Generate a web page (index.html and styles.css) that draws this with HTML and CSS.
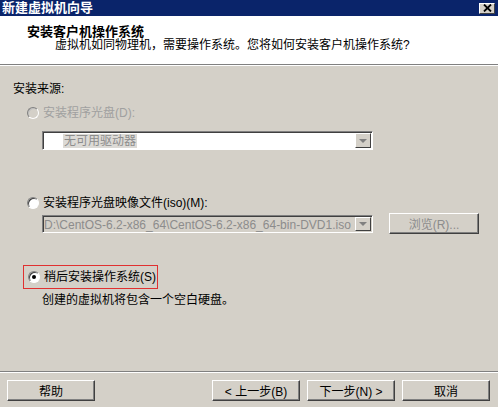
FILE: index.html
```html
<!DOCTYPE html>
<html lang="zh-CN">
<head>
  <meta charset="UTF-8" />
  <title>新建虚拟机向导</title>
  <link rel="stylesheet" href="styles.css">
</head>
<body>

  <div class="window">
    <div class="titlebar">
      <span class="title">新建虚拟机向导</span>
      <span class="close">
        <svg width="9" height="8" viewBox="0 0 9 8"><path d="M1 0.5 L8 7.5 M8 0.5 L1 7.5" stroke="#000" stroke-width="1.8"/></svg>
      </span>
    </div>

    <div class="header">
      <h1>安装客户机操作系统</h1>
      <p>虚拟机如同物理机，需要操作系统。您将如何安装客户机操作系统?</p>
    </div>

    <div class="content">
      <div class="group-label">安装来源:</div>

      <div class="option disabled">
        <span class="radio"></span>
        <span>安装程序光盘(D):</span>
      </div>
      <div class="combo combo-empty">
        <span class="combo-text"><span class="sel">无可用驱动器</span></span>
        <span class="drop"><i></i></span>
      </div>

      <div class="option iso">
        <span class="radio"></span>
        <span>安装程序光盘映像文件(iso)(M):</span>
      </div>
      <div class="iso-row">
        <div class="combo combo-iso">
          <span class="combo-text">D:\CentOS-6.2-x86_64\CentOS-6.2-x86_64-bin-DVD1.iso</span>
          <span class="drop"><i></i></span>
        </div>
        <button class="btn browse" disabled>浏览(R)...</button>
      </div>

      <div class="option later">
        <span class="radio checked"></span>
        <span>稍后安装操作系统(S)</span>
      </div>
      <p class="note">创建的虚拟机将包含一个空白硬盘。</p>
    </div>

    <div class="footer">
      <button class="btn">帮助</button>
      <div class="nav">
        <button class="btn">&lt; 上一步(B)</button>
        <button class="btn">下一步(N) &gt;</button>
        <button class="btn">取消</button>
      </div>
    </div>
  </div>

</body>
</html>
```

FILE: styles.css
```css
* {
  box-sizing: border-box;
  margin: 0;
  padding: 0;
}
body {
  font-family: "Liberation Sans", "Noto Sans CJK SC", sans-serif;
  font-size: 12px;
  background: #d4d0c8;
  color: #000;
}
.window {
  width: 498px;
  height: 407px;
  background: #d4d0c8;
  display: flex;
  flex-direction: column;
}
.titlebar {
  height: 16px;
  background: #0a246a;
  display: flex;
  justify-content: space-between;
  align-items: center;
  padding: 0 3px 0 2px;
}
.title {
  color: #fff;
  font-weight: bold;
  font-size: 13px;
  line-height: 16px;
}
.close {
  width: 16px;
  height: 11px;
  background: #d4d0c8;
  border-top: 1px solid #fff;
  border-left: 1px solid #fff;
  border-right: 1px solid #404040;
  border-bottom: 1px solid #404040;
  display: flex;
  align-items: center;
  justify-content: center;
}
.header {
  height: 49px;
  background: #fff;
  border-bottom: 1px solid #808080;
  box-shadow: 0 1px 0 #fff;
  padding: 8px 0 0 27px;
}
.header h1 {
  font-size: 13px;
  font-weight: bold;
  line-height: 16px;
}
.header p {
  line-height: 16px;
  margin: -3px 0 0 28px;
}
.content {
  height: 305px;
  margin-top: 1px;
  padding: 15px 0 0 13px;
}
.group-label {
  line-height: 16px;
}
.option {
  display: flex;
  align-items: center;
  gap: 4px;
  line-height: 16px;
  margin: 8px 0 0 14px;
}
.option.disabled {
  color: #a0a0a0;
}
.option.iso {
  margin-top: 45px;
}
.radio {
  width: 12px;
  height: 12px;
  border-radius: 50%;
  background: #fff;
  border: 1px solid;
  border-color: #808080 #fff #fff #808080;
  box-shadow: inset 1px 1px 0 #404040;
  position: relative;
}
.option.disabled .radio {
  background: #d4d0c8;
  box-shadow: inset 1px 1px 0 #c0c0c0;
}
.radio.checked::after {
  content: "";
  position: absolute;
  left: 3px;
  top: 3px;
  width: 4px;
  height: 4px;
  border-radius: 50%;
  background: #000;
}
.combo {
  height: 19px;
  width: 331px;
  margin: 10px 0 0 29px;
  display: flex;
  border: 1px solid;
  border-color: #808080 #fff #fff #808080;
  box-shadow: inset 1px 1px 0 #404040;
  background: #fff;
}
.combo-text {
  flex: 1;
  overflow: hidden;
  white-space: nowrap;
  line-height: 16px;
  padding: 1px 0 0 2px;
}
.combo-empty .combo-text {
  padding-left: 20px;
  color: #8c8c8c;
}
.sel {
  background: #dcdad6;
  padding: 0 1px;
}
.drop {
  width: 16px;
  margin: 1px 1px 1px 0;
  background: #d4d0c8;
  border: 1px solid;
  border-color: #fff #404040 #404040 #fff;
  display: flex;
  align-items: center;
  justify-content: center;
}
.drop i {
  width: 0;
  height: 0;
  border-left: 4px solid transparent;
  border-right: 4px solid transparent;
  border-top: 4px solid #808080;
}
.iso-row {
  display: flex;
  align-items: center;
  height: 21px;
  margin: 2px 0 0 29px;
}
.iso-row .combo {
  margin: 0;
  height: 18px;
  background: #d4d0c8;
}
.combo-iso .combo-text {
  color: #8c8c8c;
  padding-left: 1px;
}
.btn {
  font-family: inherit;
  font-size: 12px;
  width: 88px;
  height: 21px;
  background: #d4d0c8;
  color: #000;
  border: 1px solid;
  border-color: #fff #404040 #404040 #fff;
  box-shadow: inset -1px -1px 0 #808080;
}
.btn.browse {
  width: 90px;
  margin-left: 16px;
  color: #8c8c8c;
}
.option.later {
  width: 135px;
  height: 24px;
  margin: 31px 0 0 10px;
  padding-left: 4px;
  border: 1px solid #e03030;
}
.note {
  line-height: 16px;
  margin: 3px 0 0 29px;
}
.footer {
  border-top: 1px solid #808080;
  box-shadow: inset 0 1px 0 #fff;
  padding: 8px 8px 0 7px;
  display: flex;
  justify-content: space-between;
}
.nav {
  display: flex;
  gap: 7px;
}
```
